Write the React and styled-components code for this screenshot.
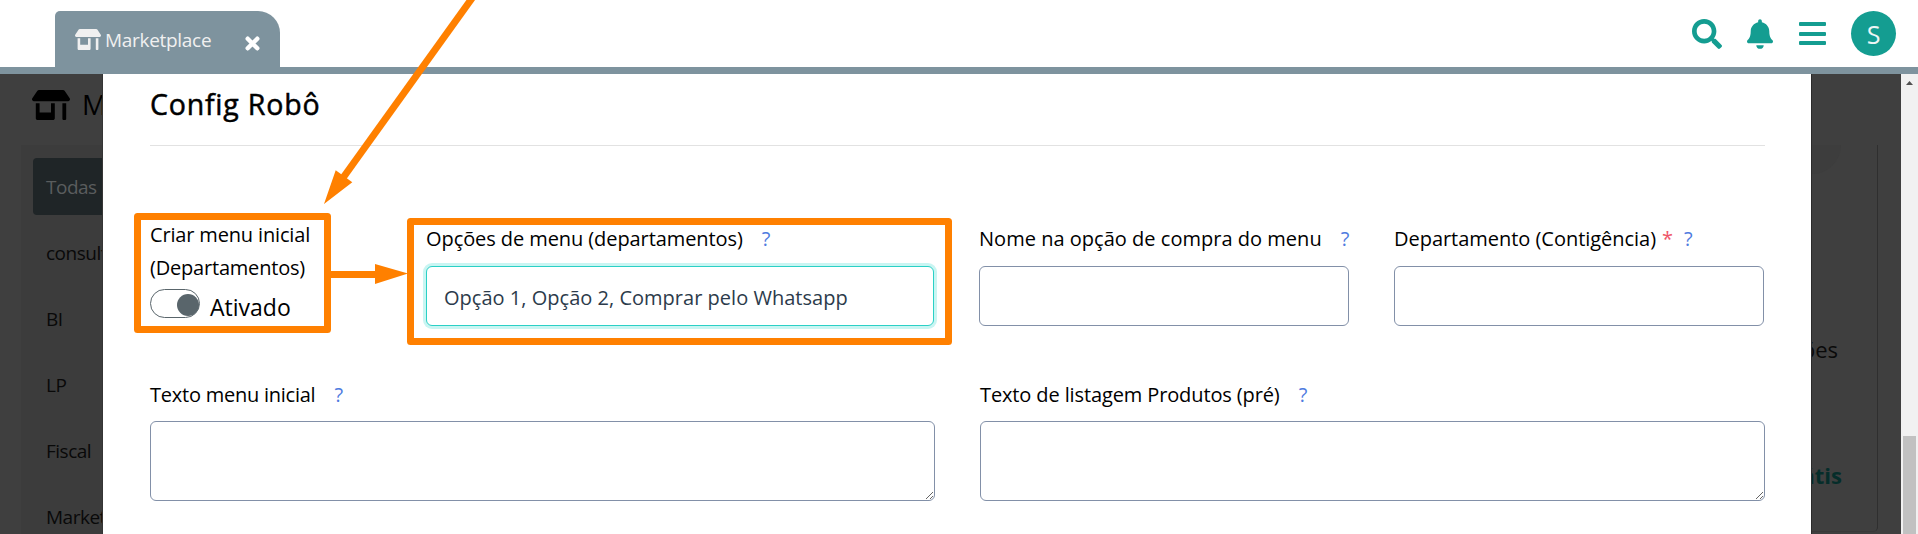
import React from "react";
import styled, { createGlobalStyle } from "styled-components";

const ORANGE = "#ff8000";
const TEAL = "#149d91";
const SLATE = "#7e939e";

const GlobalStyle = createGlobalStyle`
  * { box-sizing: border-box; }
  body {
    margin: 0;
    overflow: hidden;
    background: #fff;
    font-family: "Open Sans", "Noto Sans", sans-serif;
    color: #000;
  }
`;

const Page = styled.div`
  position: relative;
  width: 1918px;
  height: 534px;
  overflow: hidden;
  display: flex;
  flex-direction: column;
`;

const Text = styled.span`
  font-size: ${(p) => p.$size || 20}px;
  letter-spacing: ${(p) => p.$track || 0}px;
  font-weight: ${(p) => p.$weight || 400};
  white-space: nowrap;
`;

const Header = styled.header`
  height: 74px;
  flex: none;
  display: flex;
  align-items: flex-end;
  justify-content: space-between;
  border-bottom: 7px solid ${SLATE};
  padding: 0 22px 0 55px;
`;

const Tab = styled.div`
  width: 225px;
  height: 56px;
  padding: 0 20px;
  display: flex;
  align-items: center;
  background: ${SLATE};
  color: #f0f0f0;
  border-radius: 5px 22px 0 0;
`;

const TabTitle = styled(Text)`
  margin: 2px auto 0 4px;
  line-height: 28px;
`;

const TabClose = styled.svg`
  width: 15px;
  height: 15px;
  margin-top: 8px;
`;

const Tools = styled.div`
  display: flex;
  align-items: center;
  height: 67px;
`;

const ToolIcon = styled.svg`
  display: block;
  width: ${(p) => p.$w}px;
  height: 30px;
  margin-right: ${(p) => p.$gap}px;
  fill: ${TEAL};
`;

const Avatar = styled.div`
  width: 45px;
  height: 45px;
  border-radius: 50%;
  background: ${TEAL};
  color: #eef6f5;
  font-size: 25px;
  line-height: 47px;
  text-align: center;
`;

const Body = styled.div`
  flex: 1;
  min-height: 0;
  display: flex;
`;

const Side = styled.aside`
  width: 103px;
  overflow: hidden;
  background: #3f3f3f;
  border-right: 1px solid #353535;
`;

const SideHeading = styled.div`
  height: 71px;
  padding: 0 0 0 32px;
  display: flex;
  align-items: flex-start;
  gap: 12px;
  svg { flex: none; margin-top: 16px; }
  span { line-height: 40px; margin-top: 11px; }
`;

const Menu = styled.div`
  margin-left: 21px;
  padding: 13px 0 0 12px;
  height: 400px;
  background: #3c3c3c;
`;

const MenuItem = styled.div`
  height: 57px;
  width: 120px;
  margin-bottom: 9px;
  padding-left: 13px;
  border-radius: 4px;
  line-height: 58px;
  color: ${(p) => (p.$active ? "#5a5d5e" : "#090909")};
  background: ${(p) => (p.$active ? "#1f2527" : "transparent")};
`;

const Modal = styled.main`
  width: 1708px;
  padding: 10px 46px 0 47px;
  background: #fff;
`;

const Title = styled.h2`
  margin: 0 0 21px;
  height: 40px;
  line-height: 40px;
  font-size: 28.5px;
  font-weight: 400;
  -webkit-text-stroke: 0.5px #000;
  letter-spacing: 0.8px;
`;

const Divider = styled.hr`
  margin: 0;
  border: 0;
  height: 1px;
  background: #e2e2e2;
`;

const Row = styled.div`
  display: grid;
  grid-template-columns: ${(p) => p.$cols};
  column-gap: 45px;
  margin-top: ${(p) => p.$top}px;
`;

const Field = styled.div`
  padding-top: ${(p) => p.$pad || 0}px;
`;

const Label = styled.label`
  display: flex;
  height: 30px;
  line-height: 31px;
  margin-bottom: ${(p) => p.$below || 13}px;
`;

const Help = styled(Text)`
  color: #4f7be0;
  margin-left: ${(p) => p.$gap || 19}px;
`;

const Required = styled(Text)`
  color: #ee5568;
  margin-left: 6px;
`;

const Input = styled.input`
  display: block;
  width: 100%;
  height: 60px;
  padding: 2px 16px 0 17px;
  border: 1px solid ${(p) => (p.$focused ? "#2bd0c6" : "#8290a8")};
  border-radius: 6px;
  box-shadow: ${(p) => (p.$focused ? "0 0 0 3px #c9f5f2" : "none")};
  outline: none;
  font-family: inherit;
  font-size: 20px;
  letter-spacing: 0.02px;
  color: #2c3b4b;
  background: #fff;
`;

const TextArea = styled.textarea`
  display: block;
  width: 100%;
  height: 80px;
  border: 1px solid #8290a8;
  border-radius: 6px;
  outline: none;
  resize: vertical;
  background: #fff;
`;

const SwitchLabel = styled.div`
  height: 65px;
  line-height: 32px;
  padding-top: 1px;
`;

const SwitchRow = styled.div`
  display: flex;
  align-items: center;
  gap: 10px;
  margin-top: 6px;
  height: 29px;
  span { line-height: 30px; margin-top: 6px; }
`;

const Switch = styled.div`
  width: 50px;
  height: 29px;
  display: flex;
  align-items: center;
  justify-content: flex-end;
  border: 1px solid #59656b;
  border-radius: 15px;
  &::after {
    content: "";
    width: 22px;
    height: 22px;
    margin: 2px 0.5px 0 0;
    border-radius: 50%;
    background: #59656b;
  }
`;

const Rest = styled.aside`
  width: 90px;
  overflow: hidden;
  background: #3f3f3f;
  border-left: 1px solid #2b2b2b;
  padding-top: 71px;
`;

const Card = styled.div`
  width: 66px;
  height: 387px;
  border-right: 1px solid #2f2f2f;
  border-bottom: 1px solid #393939;
  border-radius: 0 0 5px 0;
  display: flex;
  flex-direction: column;
  align-items: flex-end;
`;

const Blob = styled.div`
  align-self: flex-start;
  width: 29px;
  height: 29px;
  border-radius: 0 0 29px 0;
  background: #3d3d3d;
`;

const CardText = styled(Text)`
  line-height: 30px;
  margin-top: ${(p) => p.$top}px;
  margin-right: ${(p) => p.$right}px;
  color: ${(p) => p.$color};
`;

const Scrollbar = styled.div`
  width: 17px;
  background: #f1f1f1;
  display: flex;
  flex-direction: column;
  align-items: center;
  justify-content: space-between;
  svg { margin: 7px 0 0 -1px; }
`;

const Thumb = styled.div`
  width: 13px;
  height: 98px;
  background: #c1c1c1;
`;

const Annotations = styled.svg`
  position: absolute;
  left: 0;
  top: 0;
  pointer-events: none;
`;

function Store({ w, h }) {
  return (
    <svg width={w} height={h} viewBox="0 0 640 512" preserveAspectRatio="none">
      <path
        fill="currentColor"
        d="M320 384H128V224H64v256c0 17.700 14.300 32 32 32h256c17.700 0 32-14.300 32-32V224h-64v160zm314.600-241.800l-85.300-128c-6-8.900-16-14.200-26.700-14.200H117.400c-10.700 0-20.700 5.300-26.600 14.200l-85.300 128c-14.200 21.300 1 49.800 26.600 49.800H608c25.500 0 40.700-28.500 26.600-49.800zM512 496c0 8.800 7.200 16 16 16h32c8.800 0 16-7.200 16-16V224h-64v272z"
      />
    </svg>
  );
}

function FieldLabel({ text, track, required, below, gap }) {
  return (
    <Label $below={below}>
      <Text $track={track}>{text}</Text>
      {required && <Required>*</Required>}
      <Help $gap={gap}>?</Help>
    </Label>
  );
}

const categories = ["Todas", "consultoria", "BI", "LP", "Fiscal", "Marketing"];

export default function App() {
  return (
    <Page>
      <GlobalStyle />
      <Header>
        <Tab>
          <Store w={26} h={21} />
          <TabTitle $size={19} $track={-0.3}>Marketplace</TabTitle>
          <TabClose viewBox="0 0 15 15">
            <path d="M2.700 2.700L12.300 12.300M12.300 2.700L2.700 12.300" stroke="#fff" strokeWidth="4.400" strokeLinecap="round" />
          </TabClose>
        </Tab>
        <Tools>
          <ToolIcon $w={30} $gap={25} viewBox="0 0 512 512">
            <path d="M505 442.700L405.300 343c-4.500-4.500-10.600-7-17-7H372c27.600-35.300 44-79.700 44-128C416 93.100 322.900 0 208 0S0 93.100 0 208s93.100 208 208 208c48.300 0 92.700-16.400 128-44v16.300c0 6.400 2.500 12.500 7 17l99.700 99.700c9.400 9.400 24.600 9.400 33.900 0l28.300-28.300c9.400-9.400 9.400-24.600.1-34zM208 336c-70.700 0-128-57.200-128-128 0-70.700 57.200-128 128-128 70.700 0 128 57.200 128 128 0 70.700-57.200 128-128 128z" />
          </ToolIcon>
          <ToolIcon $w={26} $gap={26} viewBox="0 0 448 512">
            <path d="M224 512c35.320 0 63.970-28.650 63.970-64H160.030c0 35.350 28.650 64 63.970 64zm215.390-149.710c-19.320-20.760-55.470-51.990-55.470-154.290 0-77.700-54.480-139.900-127.940-155.160V32c0-17.670-14.320-32-31.980-32s-31.980 14.330-31.980 32v20.840C118.560 68.100 64.080 130.300 64.080 208c0 102.300-36.150 133.530-55.470 154.290-6 6.450-8.660 14.160-8.610 21.710.11 16.400 12.980 32 32.100 32h383.800c19.120 0 32-15.600 32.100-32 .05-7.550-2.610-15.270-8.610-21.710z" />
          </ToolIcon>
          <ToolIcon $w={27} $gap={25} viewBox="0 0 27 30">
            <rect x="0" y="3" width="27" height="4" rx="1" />
            <rect x="0" y="13" width="27" height="4" rx="1" />
            <rect x="0" y="22" width="27" height="4" rx="1" />
          </ToolIcon>
          <Avatar>S</Avatar>
        </Tools>
      </Header>
      <Body>
        <Side>
          <SideHeading>
            <Store w={38} h={30} />
            <Text $size={27.5}>Marketplace</Text>
          </SideHeading>
          <Menu>
            {categories.map((name, i) => (
              <MenuItem key={name} $active={i === 0}>
                <Text $size={19} $track={-0.5}>{name}</Text>
              </MenuItem>
            ))}
          </Menu>
        </Side>
        <Modal>
          <Title>Config Robô</Title>
          <Divider />
          <Row $cols="231px 508px 370px 370px" $top={72}>
            <div>
              <SwitchLabel>
                <Text $track={-0.16}>Criar menu inicial</Text>
                <br />
                <Text $track={-0.2}>(Departamentos)</Text>
              </SwitchLabel>
              <SwitchRow>
                <Switch />
                <Text $size={23}>Ativado</Text>
              </SwitchRow>
            </div>
            <Field $pad={5}>
              <FieldLabel text="Opções de menu (departamentos)" track={-0.08} />
              <Input $focused defaultValue="Opção 1, Opção 2, Comprar pelo Whatsapp" />
            </Field>
            <Field $pad={5}>
              <FieldLabel text="Nome na opção de compra do menu" track={0.02} />
              <Input />
            </Field>
            <Field $pad={5}>
              <FieldLabel text="Departamento (Contigência)" track={-0.03} required gap={11} />
              <Input />
            </Field>
          </Row>
          <Row $cols="785px 785px" $top={53}>
            <Field>
              <FieldLabel text="Texto menu inicial" track={-0.24} below={12} />
              <TextArea />
            </Field>
            <Field>
              <FieldLabel text="Texto de listagem Produtos (pré)" track={-0.12} below={12} />
              <TextArea />
            </Field>
          </Row>
        </Modal>
        <Rest>
          <Card>
            <Blob />
            <CardText $size={22} $top={160} $right={39} $color="#0a0a0a">Informações</CardText>
            <CardText $size={22} $weight={700} $top={96} $right={35} $color="#052d2a">Grátis</CardText>
          </Card>
        </Rest>
        <Scrollbar>
          <svg width="7" height="4" viewBox="0 0 7 4">
            <path d="M3.500 0L7 4H0z" fill="#505050" />
          </svg>
          <Thumb />
        </Scrollbar>
      </Body>
      <Annotations width="1918" height="534" viewBox="0 0 1918 534">
        <g fill="none" stroke={ORANGE} strokeWidth="7" strokeLinejoin="round">
          <rect x="137.500" y="216.500" width="190" height="113" />
          <rect x="410.500" y="221.500" width="538" height="120" />
          <path d="M331 274.500H377" />
          <path d="M473.600 -4L343.600 177" />
        </g>
        <path fill={ORANGE} d="M324 204L335.700 170.300L352.300 182.300zM408 273.500L375 264V284z" />
      </Annotations>
    </Page>
  );
}
